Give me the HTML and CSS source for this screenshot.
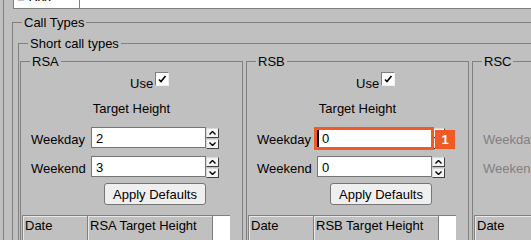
FILE: index.html
```html
<!DOCTYPE html>
<html lang="en">
<head>
  <meta charset="UTF-8" />
  <title>Call Types</title>
  <link rel="stylesheet" href="styles.css">
</head>
<body>
  <div class="panel">
    <!-- list row cut off at the top -->
    <div class="strip">
      <div class="strip-cell"><span class="strip-text">&#9632; Rxx</span></div>
      <div class="strip-cell wide"></div>
    </div>

    <fieldset class="box calltypes">
      <legend>Call Types</legend>
      <div class="calltypes-body">
        <fieldset class="box short">
          <legend>Short call types</legend>
          <div class="groups">

            <!-- RSA -->
            <fieldset class="box group">
              <legend>RSA</legend>
              <div class="use">
                <span>Use</span>
                <span class="check"><svg width="12" height="12" viewBox="0 0 12 12"><path d="M3 6.5 L5 8.5 L9.5 3" fill="none" stroke="#000" stroke-width="1.6"/></svg></span>
              </div>
              <div class="title">Target Height</div>
              <div class="fields">
                <label>Weekday</label>
                <span class="field"><input type="text" value="2"></span>
                <span class="spin">
                  <button><svg width="7" height="4" viewBox="0 0 7 4"><path d="M0.5 3.5 L3.5 0.5 L6.5 3.5" fill="none" stroke="#000" stroke-width="1.4"/></svg></button>
                  <button><svg width="7" height="4" viewBox="0 0 7 4"><path d="M0.5 0.5 L3.5 3.5 L6.5 0.5" fill="none" stroke="#000" stroke-width="1.4"/></svg></button>
                </span>
                <label>Weekend</label>
                <span class="field"><input type="text" value="3"></span>
                <span class="spin">
                  <button><svg width="7" height="4" viewBox="0 0 7 4"><path d="M0.5 3.5 L3.5 0.5 L6.5 3.5" fill="none" stroke="#000" stroke-width="1.4"/></svg></button>
                  <button><svg width="7" height="4" viewBox="0 0 7 4"><path d="M0.5 0.5 L3.5 3.5 L6.5 0.5" fill="none" stroke="#000" stroke-width="1.4"/></svg></button>
                </span>
                <button class="apply">Apply Defaults</button>
              </div>
              <div class="grid">
                <div class="grid-head">
                  <div class="cell date">Date</div>
                  <div class="cell target">RSA Target Height</div>
                </div>
              </div>
            </fieldset>

            <!-- RSB -->
            <fieldset class="box group">
              <legend>RSB</legend>
              <div class="use">
                <span>Use</span>
                <span class="check"><svg width="12" height="12" viewBox="0 0 12 12"><path d="M3 6.5 L5 8.5 L9.5 3" fill="none" stroke="#000" stroke-width="1.6"/></svg></span>
              </div>
              <div class="title">Target Height</div>
              <div class="fields">
                <label>Weekday</label>
                <span class="field marked"><input class="focus" type="text" value="0"><span class="badge">1</span></span>
                <span class="spin">
                  <button><svg width="7" height="4" viewBox="0 0 7 4"><path d="M0.5 3.5 L3.5 0.5 L6.5 3.5" fill="none" stroke="#000" stroke-width="1.4"/></svg></button>
                  <button><svg width="7" height="4" viewBox="0 0 7 4"><path d="M0.5 0.5 L3.5 3.5 L6.5 0.5" fill="none" stroke="#000" stroke-width="1.4"/></svg></button>
                </span>
                <label>Weekend</label>
                <span class="field"><input type="text" value="0"></span>
                <span class="spin">
                  <button><svg width="7" height="4" viewBox="0 0 7 4"><path d="M0.5 3.5 L3.5 0.5 L6.5 3.5" fill="none" stroke="#000" stroke-width="1.4"/></svg></button>
                  <button><svg width="7" height="4" viewBox="0 0 7 4"><path d="M0.5 0.5 L3.5 3.5 L6.5 0.5" fill="none" stroke="#000" stroke-width="1.4"/></svg></button>
                </span>
                <button class="apply">Apply Defaults</button>
              </div>
              <div class="grid">
                <div class="grid-head">
                  <div class="cell date">Date</div>
                  <div class="cell target">RSB Target Height</div>
                </div>
              </div>
            </fieldset>

            <!-- RSC (disabled) -->
            <fieldset class="box group off">
              <legend>RSC</legend>
              <div class="use">
                <span>Use</span>
                <span class="check"></span>
              </div>
              <div class="title">Target Height</div>
              <div class="fields">
                <label>Weekday</label>
                <span class="field"><input type="text" value="0" disabled></span>
                <span class="spin"></span>
                <label>Weekend</label>
                <span class="field"><input type="text" value="0" disabled></span>
                <span class="spin"></span>
                <button class="apply" disabled>Apply Defaults</button>
              </div>
              <div class="grid">
                <div class="grid-head">
                  <div class="cell date">Date</div>
                  <div class="cell target">RSC Target Height</div>
                </div>
              </div>
            </fieldset>

          </div>
        </fieldset>
      </div>
    </fieldset>
  </div>
</body>
</html>
```

FILE: styles.css
```css
/* page */
html, body {
  margin: 0;
  overflow: hidden;
}
body {
  background: #c0c0c0;
  font: 13px/15px "Liberation Sans", Arial, sans-serif;
  color: #000;
}
.panel {
  width: 800px;
  height: 240px;
  margin-left: 3px;
  padding-left: 8px;
  border-left: 1px solid #808080;
}

/* list row at the top */
.strip {
  display: flex;
  height: 8px;
  margin-left: 1px;
  background: #fff;
  border-left: 1px solid #808080;
  border-bottom: 1px solid #808080;
  overflow: hidden;
}
.strip-cell {
  width: 65px;
  border-right: 1px solid #808080;
}
.strip-cell.wide {
  flex: 1;
  border-right: none;
}
.strip-text {
  display: block;
  margin: -11px 0 0 3px;
}

/* group boxes */
.box {
  margin: 0;
  padding: 0;
  min-width: 0;
  border: 1px solid #808080;
  box-sizing: border-box;
}
.box legend {
  margin-left: 9px;
  padding: 0 2px;
}
.calltypes {
  margin-top: 6px;
  height: 300px;
}
.calltypes-body {
  padding: 6px 0 0 5px;
}
.short {
  height: 300px;
}
.groups {
  display: flex;
  gap: 3px;
  padding: 3px 0 0 1px;
}
.group {
  width: 223px;
  flex-shrink: 0;
  height: 260px;
}

/* use + title */
.use {
  display: flex;
  align-items: flex-end;
  gap: 2px;
  margin: 3px 0 0 109px;
}
.check {
  width: 14px;
  height: 14px;
  margin-bottom: 5px;
  box-sizing: border-box;
  background: #fff;
  border: 1px solid;
  border-color: #808080 #f0f0f0 #f0f0f0 #808080;
  display: flex;
  align-items: center;
  justify-content: center;
}
.title {
  margin-top: 10px;
  text-align: center;
}

/* weekday / weekend rows */
.fields {
  display: grid;
  grid-template-columns: 60px 115px 13px;
  row-gap: 8px;
  margin-top: 11px;
  padding-left: 10px;
  align-items: start;
}
.fields label {
  align-self: end;
  margin-bottom: 1px;
}
.field {
  position: relative;
  display: block;
}
.field input {
  display: block;
  width: 100%;
  height: 21px;
  box-sizing: border-box;
  margin: 0;
  padding: 3px 4px 1px;
  border: 1px solid #767676;
  background: #fff;
  font: 13px/15px "Liberation Sans", Arial, sans-serif;
  color: #000;
  outline: none;
}
.field input.focus {
  border-color: #000;
  border-left-width: 2px;
  padding-left: 3px;
}
.field.marked::after {
  content: "";
  position: absolute;
  left: -3px; right: -2px;
  top: 0; bottom: -2px;
  border: 3px solid #f15a24;
  pointer-events: none;
}
.badge {
  position: absolute;
  left: 118px; top: 3px;
  width: 20px; height: 19px;
  background: #f15a24;
  color: #fff;
  font-weight: bold;
  line-height: 19px;
  text-align: center;
  z-index: 2;
}
.spin {
  display: flex;
  flex-direction: column;
  gap: 1px;
  height: 21px;
  padding-top: 1px;
  box-sizing: border-box;
}
.spin button {
  flex-shrink: 0;
  width: 13px;
  height: 10px;
  padding: 0;
  margin: 0;
  box-sizing: border-box;
  background: #f4f4f4;
  border: 1px solid;
  border-color: #d8d8d8 #404040 #404040 #d8d8d8;
  display: flex;
  align-items: center;
  justify-content: center;
}
.apply {
  grid-column: 2;
  justify-self: end;
  width: 102px;
  height: 22px;
  margin-top: -2px;
  padding: 0;
  background: #efefef;
  border: 1px solid #767676;
  border-radius: 3px;
  font: 13px/15px "Liberation Sans", Arial, sans-serif;
  color: #000;
}

/* date table */
.grid {
  width: 207px;
  height: 60px;
  margin: 10px 0 0 1px;
  background: #fff;
  border-top: 1px solid #808080;
  border-left: 1px solid #808080;
}
.grid-head {
  display: flex;
}
.cell {
  height: 26px;
  box-sizing: border-box;
  padding: 2px 2px 0;
  background: #c0c0c0;
  border-right: 1px solid #808080;
  border-bottom: 1px solid #808080;
  box-shadow: inset 1px 1px #e8e8e8;
}
.cell.date { width: 65px; }
.cell.target { width: 125px; }

/* disabled group */
.group.off .use,
.group.off .title,
.group.off label {
  color: #808080;
}
```
